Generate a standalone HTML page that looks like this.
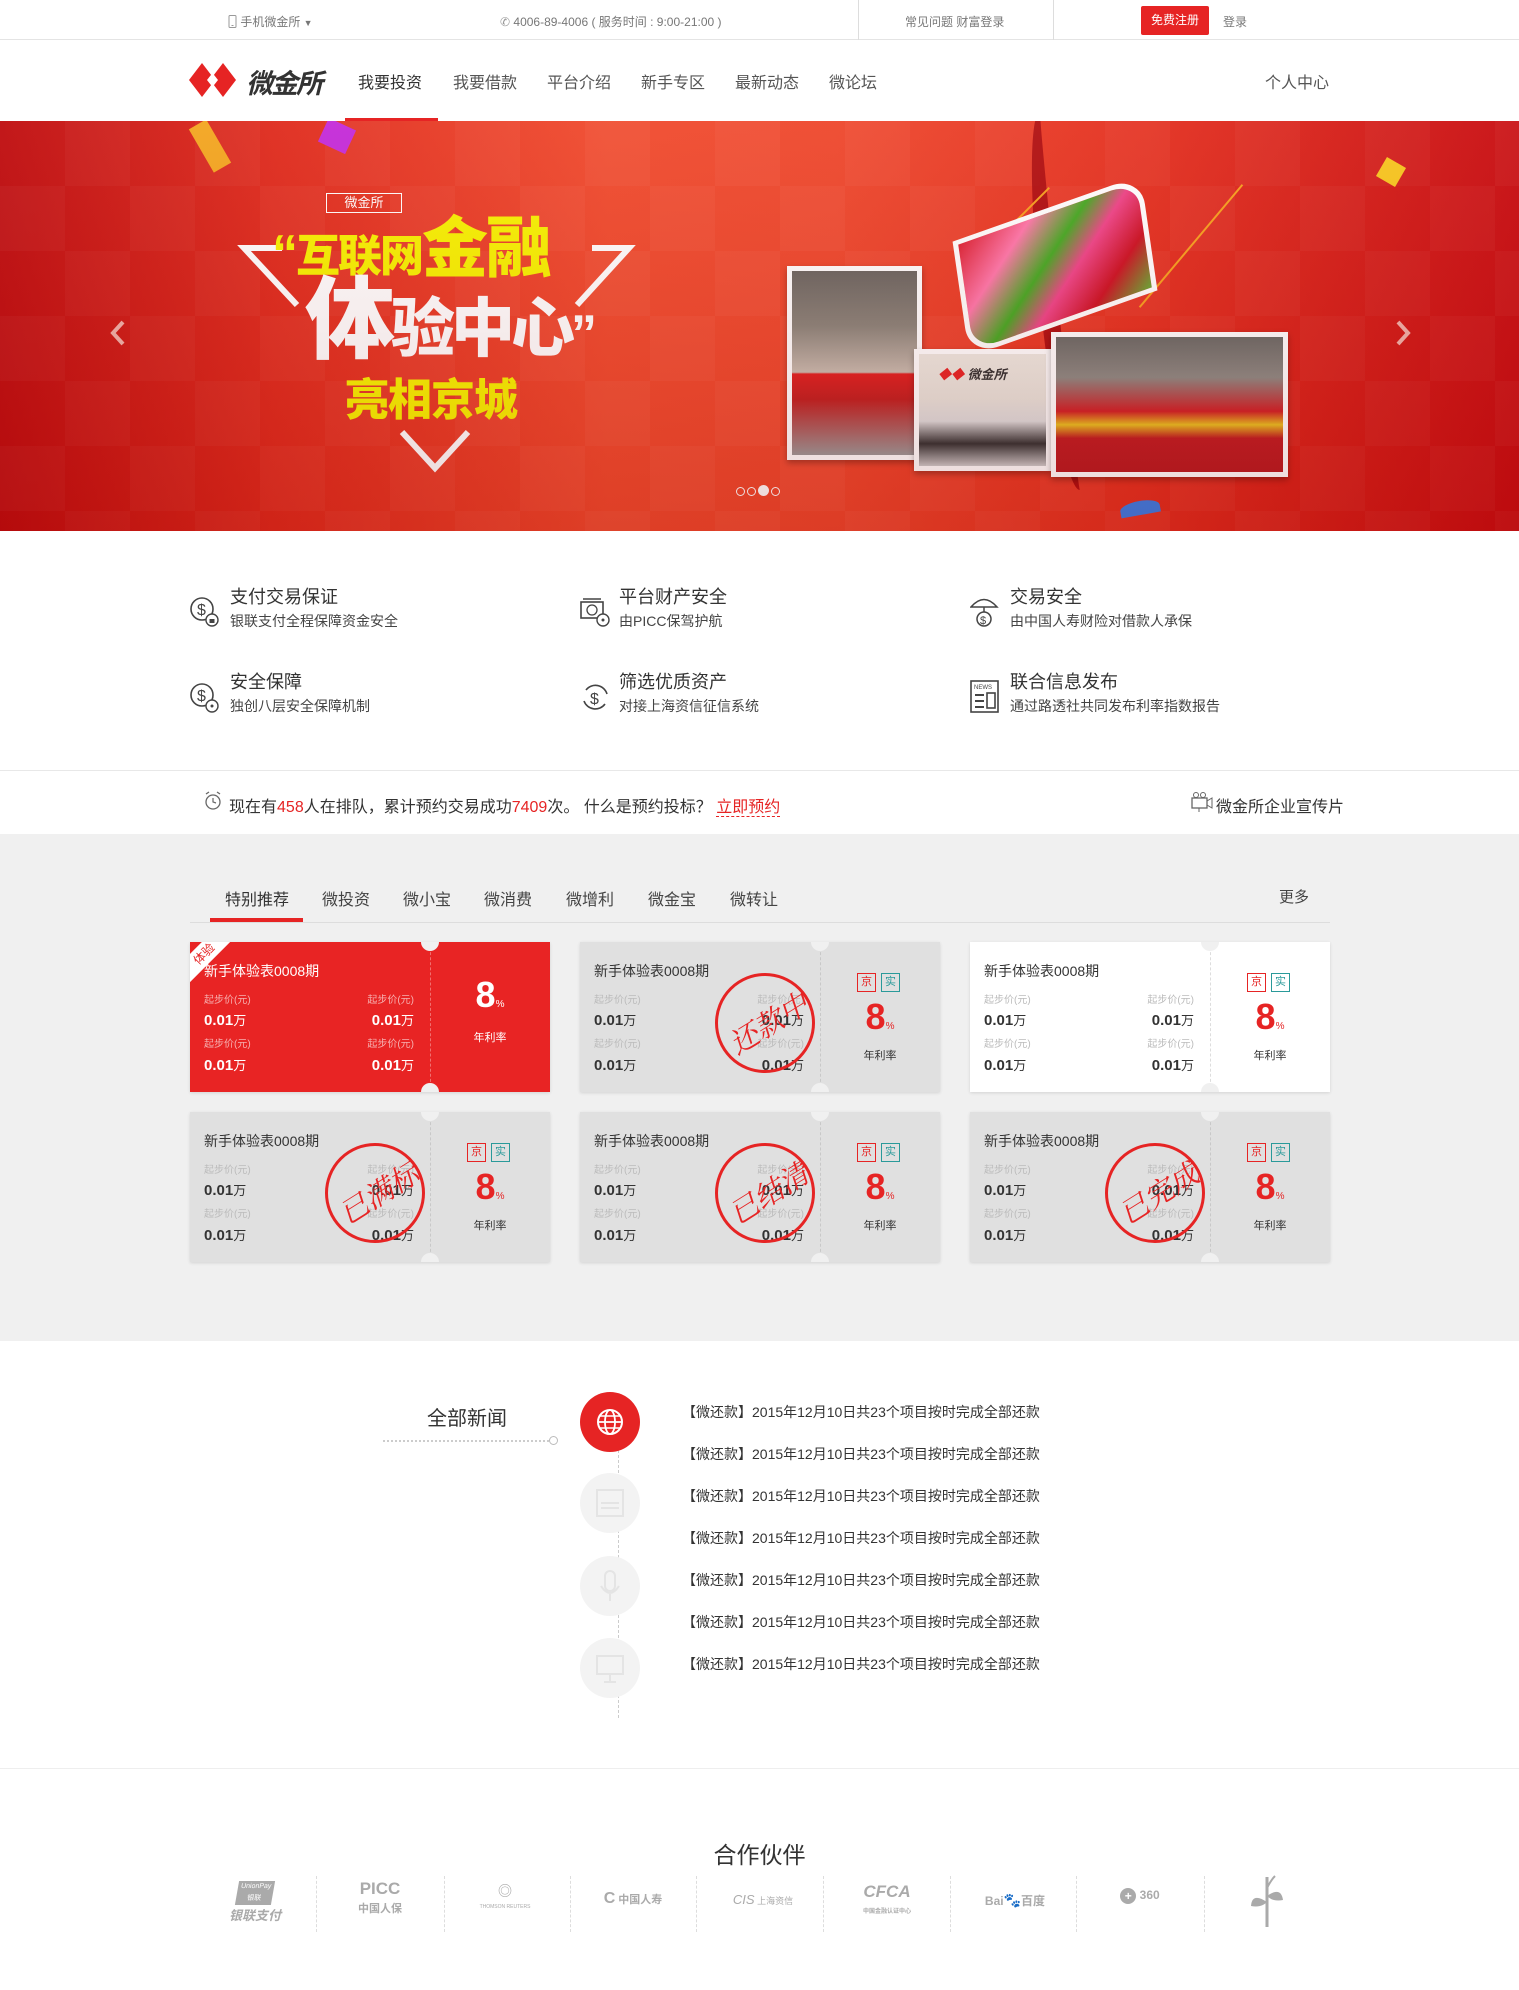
<!DOCTYPE html>
<html><head><meta charset="utf-8">
<style>
*{margin:0;padding:0;box-sizing:border-box}
body{width:1519px;height:1990px;background:#fff;font-family:"Liberation Sans","Noto Sans CJK SC",sans-serif;color:#333;position:relative;overflow:hidden}
.a{position:absolute;white-space:nowrap}
.top{position:absolute;left:0;top:0;width:1519px;height:40px;border-bottom:1px solid #e4e4e4;font-size:12px;color:#777}
.nav{font-size:16px;color:#555}
.banner{position:absolute;left:0;top:121px;width:1519px;height:410px;overflow:hidden;
background:linear-gradient(90deg,#bf0c0e 0%,#df2a1c 18%,#f04a2d 40%,#ee472c 55%,#e4301f 75%,#c80c10 100%)}
.banner:after{content:"";position:absolute;inset:0;background:linear-gradient(180deg,rgba(255,255,255,0.05),rgba(120,0,0,0.15));}
.chk{position:absolute;inset:0;background-image:linear-gradient(45deg,rgba(255,255,255,.03) 25%,transparent 25%,transparent 75%,rgba(255,255,255,.03) 75%),linear-gradient(45deg,rgba(255,255,255,.03) 25%,transparent 25%,transparent 75%,rgba(255,255,255,.03) 75%);background-size:130px 130px;background-position:0 0,65px 65px}
.ft{font-size:18px;color:#333}
.fs{font-size:14px;color:#444}
.gray{position:absolute;left:0;top:834px;width:1519px;height:507px;background:#f0f0f0}
.card{position:absolute;width:360px;height:150px;background:#e0e0e0;box-shadow:0 1px 3px rgba(0,0,0,.12);overflow:hidden}
.card .dv{position:absolute;left:240px;top:0;height:150px;border-left:1px dashed #c8c8c8}
.card .n1,.card .n2{position:absolute;left:231px;width:18px;height:18px;border-radius:50%;background:#f0f0f0}
.card .n1{top:-9px}.card .n2{bottom:-9px}
.card .t{position:absolute;left:14px;top:19px;font-size:14px;color:#333}
.card .l{position:absolute;font-size:10px;color:#bbb}
.card .v{position:absolute;font-size:15px;font-weight:bold;color:#333}
.card .v small{font-size:13px;font-weight:normal}
.card .r{left:auto;right:136px}
.card .big{position:absolute;left:0;width:120px;text-align:center;font-size:36px;font-weight:bold;color:#e62424}
.card .big small{font-size:10px;font-weight:normal}
.card .yr{position:absolute;left:240px;width:120px;text-align:center;font-size:11px;color:#333}
.bd{position:absolute;width:19px;height:19px;border:1px solid #e62424;color:#e62424;font-size:11px;text-align:center;line-height:17px}
.bd.g{border-color:#2a9a9a;color:#2a9a9a}
.stamp{position:absolute;width:100px;height:100px;border:3px solid #e62424;border-radius:50%;}
.stamp span{position:absolute;left:-4px;top:26px;width:108px;text-align:center;font-size:29px;color:#e62424;transform:rotate(-32deg);font-family:"Noto Serif CJK SC","Noto Sans CJK SC",serif;font-style:italic}
.news{position:absolute;left:682px;font-size:14px;color:#333}
.circ{position:absolute;left:580px;width:60px;height:60px;border-radius:50%;background:#f3f3f3}
.sep{position:absolute;top:1876px;height:56px;border-left:1px dashed #ddd}
.lg{position:absolute;color:#aaa;font-weight:bold;text-align:center}
</style></head><body>

<div class="top">
 <div class="a" style="left:228px;top:13px"><svg width="9" height="13" style="vertical-align:-2px"><rect x="1" y="0.5" width="7" height="12" rx="1" fill="none" stroke="#999"/><line x1="3.5" y1="10.5" x2="5.5" y2="10.5" stroke="#999"/></svg> 手机微金所 <span style="font-size:9px">&#9660;</span></div>
 <div class="a" style="left:500px;top:13px"><span style="color:#999">&#9990;</span> 4006-89-4006 ( 服务时间 : 9:00-21:00 )</div>
 <div style="position:absolute;left:858px;top:0;height:40px;border-left:1px solid #ddd"></div>
 <div style="position:absolute;left:1053px;top:0;height:40px;border-left:1px solid #ddd"></div>
 <div class="a" style="left:905px;top:13px">常见问题 财富登录</div>
 <div class="a" style="left:1141px;top:6px;width:68px;height:29px;background:#e62424;color:#fff;text-align:center;line-height:29px;border-radius:2px">免费注册</div>
 <div class="a" style="left:1223px;top:13px">登录</div>
</div>

<svg class="a" style="left:189px;top:63px" width="52" height="34" viewBox="0 0 52 34"><polygon points="13,0 26,17 13,34 0,17" fill="#e62424"/><polygon points="34,0 47,17 34,34 21,17" fill="#e62424"/><polygon points="23.5,10 29,17 23.5,24 18,17" fill="#fff"/></svg>
<div class="a" style="left:246px;top:62px;font-size:27px;font-weight:bold;font-style:italic;color:#333;letter-spacing:-2px">微金所</div>
<div class="a nav" style="left:358px;top:69px;color:#333">我要投资</div>
<div class="a nav" style="left:453px;top:69px">我要借款</div>
<div class="a nav" style="left:547px;top:69px">平台介绍</div>
<div class="a nav" style="left:641px;top:69px">新手专区</div>
<div class="a nav" style="left:735px;top:69px">最新动态</div>
<div class="a nav" style="left:829px;top:69px">微论坛</div>
<div class="a nav" style="left:1265px;top:69px">个人中心</div>
<div class="a" style="left:345px;top:118px;width:93px;height:3px;background:#e62424"></div>

<div class="banner">
 <div class="chk"></div>
 <div class="a" style="left:1040px;top:-10px;width:40px;height:380px;border-radius:50%;border-left:18px solid #a4060c;transform:rotate(-6deg);opacity:.8"></div>
 <div class="a" style="left:200px;top:0;width:20px;height:50px;background:#f3a51f;transform:rotate(-30deg)"></div>
 <div class="a" style="left:322px;top:2px;width:30px;height:26px;background:#c42ad8;transform:rotate(25deg)"></div>
 <div class="a" style="left:1190px;top:45px;width:2px;height:160px;background:#f7a01e;transform:rotate(40deg)"></div>
 <div class="a" style="left:1020px;top:55px;width:2px;height:80px;background:#f7a01e;transform:rotate(45deg)"></div>
 <div class="a" style="left:1120px;top:380px;width:40px;height:14px;background:#3a7ee6;border-radius:50% 50% 0 0;transform:rotate(-10deg)"></div>
 <div class="a" style="left:1380px;top:40px;width:22px;height:22px;background:#f7c51e;transform:rotate(30deg)"></div>
 <svg class="a" style="left:0;top:0" width="700" height="410"><polyline points="282,127 244,127 297,184" fill="none" stroke="#fff" stroke-width="6"/><polyline points="592,127 629,127 577,184" fill="none" stroke="#fff" stroke-width="6"/><polyline points="402,311 435,347 468,311" fill="none" stroke="#fff" stroke-width="6"/></svg>
 <div class="a" style="left:326px;top:72px;width:76px;height:20px;border:1px solid #fff;color:#fff;font-size:13px;text-align:center;line-height:18px">微金所</div>
 <div class="a" style="left:272px;top:92px;font-size:52px;font-weight:900;color:#f7f200;letter-spacing:-2px;line-height:70px">“<span style="font-size:44px">互联网</span><span style="font-size:66px">金融</span></div>
 <div class="a" style="left:305px;top:150px;font-size:90px;font-weight:900;color:#fff;letter-spacing:-4px;line-height:100px">体<span style="font-size:64px">验中心</span><span style="font-size:52px">”</span></div>
 <div class="a" style="left:345px;top:255px;font-size:44px;font-weight:900;color:#f7f200;letter-spacing:-1px;line-height:50px">亮相京城</div>
 <div class="a" style="left:960px;top:85px;width:190px;height:120px;border:5px solid #fff;background:linear-gradient(135deg,#d23 0%,#f7a 25%,#4a2 45%,#e48 60%,#c12 80%,#6a3 100%);transform:skewY(-12deg) rotate(-8deg);border-radius:0 30px 0 30px"></div>
 <div class="a" style="left:787px;top:145px;width:135px;height:194px;background:#fff;padding:5px;box-shadow:0 3px 6px rgba(0,0,0,.3)"><div style="width:100%;height:100%;background:linear-gradient(180deg,#6a6560 0%,#8a847a 30%,#c8bcb0 55%,#e02020 56%,#c02020 70%,#9a9a9a 100%)"></div></div>
 <div class="a" style="left:914px;top:228px;width:137px;height:122px;background:#fff;padding:5px;box-shadow:0 3px 6px rgba(0,0,0,.3)"><div style="width:100%;height:100%;background:linear-gradient(180deg,#eeeae2 0%,#e8e4dc 40%,#ddd 60%,#333 80%,#ccc 100%)"></div></div>
 <div class="a" style="left:938px;top:243px;font-size:13px;font-weight:bold;font-style:italic;color:#333"><span style="color:#e62424">◆◆</span> 微金所</div>
 <div class="a" style="left:1051px;top:211px;width:237px;height:145px;background:#fff;padding:5px;box-shadow:0 3px 6px rgba(0,0,0,.3)"><div style="width:100%;height:100%;background:linear-gradient(180deg,#6a6a66 0%,#8c8a84 30%,#d02026 55%,#e8c020 65%,#c01c22 75%,#b81a20 100%)"></div></div>
 <div class="a" style="left:736px;top:364px;font-size:0">
  <span style="display:inline-block;width:9px;height:9px;border:1px solid #fff;border-radius:50%;margin-right:2px"></span><span style="display:inline-block;width:9px;height:9px;border:1px solid #fff;border-radius:50%;margin-right:2px"></span><span style="display:inline-block;width:11px;height:11px;background:#fff;border-radius:50%;margin-right:2px"></span><span style="display:inline-block;width:9px;height:9px;border:1px solid #fff;border-radius:50%"></span>
 </div>
 <svg class="a" style="left:108px;top:198px" width="20" height="28"><polyline points="15,3 5,14 15,25" fill="none" stroke="#f0b0a8" stroke-width="4"/></svg>
 <svg class="a" style="left:1393px;top:198px" width="20" height="28"><polyline points="5,3 15,14 5,25" fill="none" stroke="#f0b0a8" stroke-width="4"/></svg>
</div>

<svg class="a" style="left:189px;top:596px" width="32" height="32" viewBox="0 0 32 32"><circle cx="13" cy="13" r="11" fill="none" stroke="#444" stroke-width="1.6"/><text x="8" y="19" font-size="16" fill="#444" font-family="Liberation Sans">$</text><circle cx="23" cy="24" r="6" fill="#fff" stroke="#444" stroke-width="1.4"/><rect x="20.5" y="23" width="5" height="4" fill="#444"/></svg>
<div class="a ft" style="left:230px;top:583px">支付交易保证</div>
<div class="a fs" style="left:230px;top:611px">银联支付全程保障资金安全</div>
<svg class="a" style="left:580px;top:596px" width="32" height="32" viewBox="0 0 32 32"><rect x="1" y="6" width="22" height="16" fill="none" stroke="#444" stroke-width="1.6"/><line x1="3" y1="3" x2="21" y2="3" stroke="#444" stroke-width="1.5"/><circle cx="12" cy="14" r="5" fill="none" stroke="#444" stroke-width="1.3"/><circle cx="23" cy="24" r="6" fill="#fff" stroke="#444" stroke-width="1.4"/><circle cx="23" cy="24" r="1.5" fill="#444"/></svg>
<div class="a ft" style="left:619px;top:583px">平台财产安全</div>
<div class="a fs" style="left:619px;top:611px">由PICC保驾护航</div>
<svg class="a" style="left:970px;top:594px" width="32" height="34" viewBox="0 0 32 34"><path d="M1 13 Q14 -2 27 13 Z" fill="none" stroke="#444" stroke-width="1.6"/><line x1="14" y1="13" x2="14" y2="18" stroke="#444" stroke-width="1.5"/><circle cx="14" cy="25" r="7" fill="none" stroke="#444" stroke-width="1.5"/><text x="10" y="30" font-size="11" fill="#444">$</text></svg>
<div class="a ft" style="left:1010px;top:583px">交易安全</div>
<div class="a fs" style="left:1010px;top:611px">由中国人寿财险对借款人承保</div>

<svg class="a" style="left:189px;top:682px" width="32" height="32" viewBox="0 0 32 32"><circle cx="13" cy="13" r="11" fill="none" stroke="#444" stroke-width="1.6"/><text x="8" y="19" font-size="16" fill="#444">$</text><circle cx="23" cy="24" r="6" fill="#fff" stroke="#444" stroke-width="1.4"/><circle cx="23" cy="24" r="1.5" fill="#444"/></svg>
<div class="a ft" style="left:230px;top:668px">安全保障</div>
<div class="a fs" style="left:230px;top:696px">独创八层安全保障机制</div>
<svg class="a" style="left:580px;top:682px" width="32" height="32" viewBox="0 0 32 32"><path d="M6 8 A12 12 0 0 1 27 12" fill="none" stroke="#444" stroke-width="1.6"/><path d="M25 22 A12 12 0 0 1 4 19" fill="none" stroke="#444" stroke-width="1.6"/><text x="10" y="22" font-size="16" fill="#444">$</text></svg>
<div class="a ft" style="left:619px;top:668px">筛选优质资产</div>
<div class="a fs" style="left:619px;top:696px">对接上海资信征信系统</div>
<svg class="a" style="left:970px;top:680px" width="30" height="34" viewBox="0 0 30 34"><rect x="1" y="1" width="27" height="31" fill="none" stroke="#444" stroke-width="1.6"/><text x="4" y="9" font-size="6" fill="#444">NEWS</text><line x1="5" y1="15" x2="14" y2="15" stroke="#444" stroke-width="2"/><line x1="5" y1="21" x2="14" y2="21" stroke="#444" stroke-width="2"/><line x1="5" y1="27" x2="14" y2="27" stroke="#444" stroke-width="2"/><rect x="17" y="13" width="8" height="15" fill="none" stroke="#444" stroke-width="1.6"/></svg>
<div class="a ft" style="left:1010px;top:668px">联合信息发布</div>
<div class="a fs" style="left:1010px;top:696px">通过路透社共同发布利率指数报告</div>

<div class="a" style="left:0;top:770px;width:1519px;border-top:1px solid #e8e8e8"></div>
<svg class="a" style="left:204px;top:791px" width="18" height="20" viewBox="0 0 18 20"><circle cx="9" cy="11" r="7" fill="none" stroke="#666" stroke-width="1.3"/><polyline points="9,7 9,11 12,12" fill="none" stroke="#666" stroke-width="1.2"/><line x1="2" y1="3" x2="5" y2="1" stroke="#666" stroke-width="1.3"/><line x1="16" y1="3" x2="13" y2="1" stroke="#666" stroke-width="1.3"/></svg>
<div class="a" style="left:229px;top:793px;font-size:16px;color:#333">现在有<span style="color:#e62424">458</span>人在排队，累计预约交易成功<span style="color:#e62424">7409</span>次。 什么是预约投标？ <span style="color:#e62424;border-bottom:1px dashed #e62424">立即预约</span></div>
<svg class="a" style="left:1191px;top:792px" width="22" height="20" viewBox="0 0 22 20"><rect x="1" y="6" width="15" height="10" fill="none" stroke="#666" stroke-width="1.3"/><circle cx="5" cy="3" r="2.5" fill="none" stroke="#666"/><circle cx="12" cy="3" r="2.5" fill="none" stroke="#666"/><polygon points="16,9 21,6 21,16 16,13" fill="none" stroke="#666"/><line x1="8" y1="16" x2="8" y2="20" stroke="#666"/></svg>
<div class="a" style="left:1216px;top:793px;font-size:16px;color:#333">微金所企业宣传片</div>

<div class="gray"></div>
<div class="a" style="left:190px;top:922px;width:1140px;border-top:1px solid #ddd"></div>
<div class="a" style="left:210px;top:918px;width:93px;height:4px;background:#e62424"></div>
<div class="a" style="left:225px;top:886px;font-size:16px;color:#333">特别推荐</div>
<div class="a" style="left:322px;top:886px;font-size:16px;color:#444">微投资</div>
<div class="a" style="left:403px;top:886px;font-size:16px;color:#444">微小宝</div>
<div class="a" style="left:484px;top:886px;font-size:16px;color:#444">微消费</div>
<div class="a" style="left:566px;top:886px;font-size:16px;color:#444">微增利</div>
<div class="a" style="left:648px;top:886px;font-size:16px;color:#444">微金宝</div>
<div class="a" style="left:730px;top:886px;font-size:16px;color:#444">微转让</div>
<div class="a" style="left:1279px;top:886px;font-size:15px;color:#444">更多</div>

<div class="card" style="left:190px;top:942px;background:#e82424">
 <div class="dv" style="border-color:#f07070"></div><div class="n1"></div><div class="n2"></div>
 <div class="a" style="left:-26px;top:2px;width:80px;height:20px;background:#fff;transform:rotate(-45deg);color:#e62424;font-size:12px;text-align:center;line-height:20px">体验</div>
 <div class="t" style="color:#fff">新手体验表0008期</div>
 <div class="l" style="left:14px;top:49px;color:#f6b0b0">起步价(元)</div><div class="l r" style="top:49px;color:#f6b0b0">起步价(元)</div>
 <div class="v" style="left:14px;top:68px;color:#fff">0.01<small>万</small></div><div class="v r" style="top:68px;color:#fff">0.01<small>万</small></div>
 <div class="l" style="left:14px;top:93px;color:#f6b0b0">起步价(元)</div><div class="l r" style="top:93px;color:#f6b0b0">起步价(元)</div>
 <div class="v" style="left:14px;top:113px;color:#fff">0.01<small>万</small></div><div class="v r" style="top:113px;color:#fff">0.01<small>万</small></div>
 <div class="big" style="left:240px;top:32px;color:#fff">8<small>%</small></div>
 <div class="yr" style="top:87px;color:#fff">年利率</div>
</div>

<div class="card" style="left:580px;top:942px">
 <div class="dv"></div><div class="n1"></div><div class="n2"></div>
 <div class="t">新手体验表0008期</div>
 <div class="l" style="left:14px;top:49px">起步价(元)</div><div class="l r" style="top:49px">起步价(元)</div>
 <div class="v" style="left:14px;top:68px">0.01<small>万</small></div><div class="v r" style="top:68px">0.01<small>万</small></div>
 <div class="l" style="left:14px;top:93px">起步价(元)</div><div class="l r" style="top:93px">起步价(元)</div>
 <div class="v" style="left:14px;top:113px">0.01<small>万</small></div><div class="v r" style="top:113px">0.01<small>万</small></div>
 <div class="stamp" style="left:135px;top:31px"><span>还款中</span></div>
 <div class="bd" style="left:277px;top:31px">京</div><div class="bd g" style="left:301px;top:31px">实</div>
 <div class="big" style="left:240px;top:54px">8<small>%</small></div>
 <div class="yr" style="top:105px">年利率</div>
</div>

<div class="card" style="left:970px;top:942px;background:#fff">
 <div class="dv" style="border-color:#ddd"></div><div class="n1"></div><div class="n2"></div>
 <div class="t">新手体验表0008期</div>
 <div class="l" style="left:14px;top:49px">起步价(元)</div><div class="l r" style="top:49px">起步价(元)</div>
 <div class="v" style="left:14px;top:68px">0.01<small>万</small></div><div class="v r" style="top:68px">0.01<small>万</small></div>
 <div class="l" style="left:14px;top:93px">起步价(元)</div><div class="l r" style="top:93px">起步价(元)</div>
 <div class="v" style="left:14px;top:113px">0.01<small>万</small></div><div class="v r" style="top:113px">0.01<small>万</small></div>
 <div class="bd" style="left:277px;top:31px">京</div><div class="bd g" style="left:301px;top:31px">实</div>
 <div class="big" style="left:240px;top:54px">8<small>%</small></div>
 <div class="yr" style="top:105px">年利率</div>
</div>

<div class="card" style="left:190px;top:1112px">
 <div class="dv"></div><div class="n1"></div><div class="n2"></div>
 <div class="t">新手体验表0008期</div>
 <div class="l" style="left:14px;top:49px">起步价(元)</div><div class="l r" style="top:49px">起步价(元)</div>
 <div class="v" style="left:14px;top:68px">0.01<small>万</small></div><div class="v r" style="top:68px">0.01<small>万</small></div>
 <div class="l" style="left:14px;top:93px">起步价(元)</div><div class="l r" style="top:93px">起步价(元)</div>
 <div class="v" style="left:14px;top:113px">0.01<small>万</small></div><div class="v r" style="top:113px">0.01<small>万</small></div>
 <div class="stamp" style="left:135px;top:31px"><span>已满标</span></div>
 <div class="bd" style="left:277px;top:31px">京</div><div class="bd g" style="left:301px;top:31px">实</div>
 <div class="big" style="left:240px;top:54px">8<small>%</small></div>
 <div class="yr" style="top:105px">年利率</div>
</div>

<div class="card" style="left:580px;top:1112px">
 <div class="dv"></div><div class="n1"></div><div class="n2"></div>
 <div class="t">新手体验表0008期</div>
 <div class="l" style="left:14px;top:49px">起步价(元)</div><div class="l r" style="top:49px">起步价(元)</div>
 <div class="v" style="left:14px;top:68px">0.01<small>万</small></div><div class="v r" style="top:68px">0.01<small>万</small></div>
 <div class="l" style="left:14px;top:93px">起步价(元)</div><div class="l r" style="top:93px">起步价(元)</div>
 <div class="v" style="left:14px;top:113px">0.01<small>万</small></div><div class="v r" style="top:113px">0.01<small>万</small></div>
 <div class="stamp" style="left:135px;top:31px"><span>已结清</span></div>
 <div class="bd" style="left:277px;top:31px">京</div><div class="bd g" style="left:301px;top:31px">实</div>
 <div class="big" style="left:240px;top:54px">8<small>%</small></div>
 <div class="yr" style="top:105px">年利率</div>
</div>

<div class="card" style="left:970px;top:1112px">
 <div class="dv"></div><div class="n1"></div><div class="n2"></div>
 <div class="t">新手体验表0008期</div>
 <div class="l" style="left:14px;top:49px">起步价(元)</div><div class="l r" style="top:49px">起步价(元)</div>
 <div class="v" style="left:14px;top:68px">0.01<small>万</small></div><div class="v r" style="top:68px">0.01<small>万</small></div>
 <div class="l" style="left:14px;top:93px">起步价(元)</div><div class="l r" style="top:93px">起步价(元)</div>
 <div class="v" style="left:14px;top:113px">0.01<small>万</small></div><div class="v r" style="top:113px">0.01<small>万</small></div>
 <div class="stamp" style="left:135px;top:31px"><span>已完成</span></div>
 <div class="bd" style="left:277px;top:31px">京</div><div class="bd g" style="left:301px;top:31px">实</div>
 <div class="big" style="left:240px;top:54px">8<small>%</small></div>
 <div class="yr" style="top:105px">年利率</div>
</div>

<div class="a" style="left:427px;top:1402px;font-size:20px;color:#333">全部新闻</div>
<div class="a" style="left:383px;top:1440px;width:166px;border-top:2px dotted #ccc"></div>
<div class="a" style="left:549px;top:1436px;width:9px;height:9px;border:1px solid #bbb;border-radius:50%;background:#fff"></div>
<div class="a" style="left:618px;top:1440px;height:278px;border-left:1px dashed #ccc"></div>
<div class="circ" style="top:1392px;background:#e62424"><svg width="60" height="60"><circle cx="30" cy="30" r="12" fill="none" stroke="#fff" stroke-width="2"/><ellipse cx="30" cy="30" rx="5" ry="12" fill="none" stroke="#fff" stroke-width="1.8"/><line x1="18" y1="30" x2="42" y2="30" stroke="#fff" stroke-width="1.8"/><line x1="20" y1="24" x2="40" y2="24" stroke="#fff" stroke-width="1.5"/><line x1="20" y1="36" x2="40" y2="36" stroke="#fff" stroke-width="1.5"/></svg></div>
<div class="circ" style="top:1473px"><svg width="60" height="60"><rect x="17" y="17" width="26" height="26" fill="none" stroke="#e4e4e4" stroke-width="2"/><line x1="21" y1="30" x2="39" y2="30" stroke="#e4e4e4" stroke-width="2"/><line x1="21" y1="35" x2="39" y2="35" stroke="#e4e4e4" stroke-width="2"/></svg></div>
<div class="circ" style="top:1556px"><svg width="60" height="60"><rect x="25" y="15" width="10" height="20" rx="5" fill="none" stroke="#e4e4e4" stroke-width="2"/><path d="M21 30 Q30 44 39 30" fill="none" stroke="#e4e4e4" stroke-width="2"/><line x1="30" y1="38" x2="30" y2="45" stroke="#e4e4e4" stroke-width="2"/></svg></div>
<div class="circ" style="top:1638px"><svg width="60" height="60"><rect x="17" y="18" width="26" height="18" fill="none" stroke="#e4e4e4" stroke-width="2"/><line x1="30" y1="36" x2="30" y2="44" stroke="#e4e4e4" stroke-width="2"/><line x1="24" y1="44" x2="36" y2="44" stroke="#e4e4e4" stroke-width="2"/></svg></div>
<div class="news" style="top:1402px">【微还款】2015年12月10日共23个项目按时完成全部还款</div>
<div class="news" style="top:1444px">【微还款】2015年12月10日共23个项目按时完成全部还款</div>
<div class="news" style="top:1486px">【微还款】2015年12月10日共23个项目按时完成全部还款</div>
<div class="news" style="top:1528px">【微还款】2015年12月10日共23个项目按时完成全部还款</div>
<div class="news" style="top:1570px">【微还款】2015年12月10日共23个项目按时完成全部还款</div>
<div class="news" style="top:1612px">【微还款】2015年12月10日共23个项目按时完成全部还款</div>
<div class="news" style="top:1654px">【微还款】2015年12月10日共23个项目按时完成全部还款</div>

<div class="a" style="left:0;top:1768px;width:1519px;border-top:1px solid #eee"></div>

<div class="a" style="left:0;top:1836px;width:1519px;text-align:center;font-size:23px;color:#333">合作伙伴</div>
<div class="sep" style="left:316px"></div><div class="sep" style="left:444px"></div><div class="sep" style="left:570px"></div><div class="sep" style="left:696px"></div><div class="sep" style="left:823px"></div><div class="sep" style="left:950px"></div><div class="sep" style="left:1076px"></div><div class="sep" style="left:1204px"></div>
<div class="a" style="left:237px;top:1881px;width:36px;height:24px;background:#aaa;transform:skewX(-10deg);color:#fff;font-size:7px;text-align:center;line-height:12px">UnionPay<br>银联</div>
<div class="lg a" style="left:225px;top:1905px;width:60px;font-size:13px;font-style:italic">银联支付</div>
<div class="lg a" style="left:350px;top:1880px;width:60px;font-size:17px;line-height:18px">PICC<br><span style="font-size:11px">中国人保</span></div>
<div class="lg a" style="left:470px;top:1885px;width:70px;font-size:14px;line-height:12px">◎<br><span style="font-size:5px;font-weight:normal">THOMSON REUTERS</span></div>
<div class="lg a" style="left:598px;top:1890px;width:70px;font-size:11px"><span style="font-size:16px">C</span> 中国人寿</div>
<div class="lg a" style="left:728px;top:1892px;width:70px;font-size:9px;font-weight:normal"><i style="font-size:13px">CIS</i> 上海资信</div>
<div class="lg a" style="left:852px;top:1884px;width:70px;font-size:17px;font-style:italic;line-height:16px">CFCA<br><span style="font-size:6px;font-style:normal">中国金融认证中心</span></div>
<div class="lg a" style="left:980px;top:1892px;width:70px;font-size:12px">Bai<span style="font-size:14px">🐾</span>百度</div>
<div class="lg a" style="left:1105px;top:1888px;width:70px;font-size:12px"><span style="display:inline-block;width:16px;height:16px;border-radius:50%;background:#aaa;color:#fff;line-height:16px;vertical-align:middle">+</span> 360</div>
<svg class="a" style="left:1247px;top:1872px" width="40" height="60"><line x1="20" y1="5" x2="20" y2="55" stroke="#aaa" stroke-width="3"/><path d="M20 30 Q5 20 4 34 Q14 36 20 30" fill="#aaa"/><path d="M20 24 Q34 14 36 28 Q26 30 20 24" fill="#aaa"/><path d="M20 16 Q24 8 28 4" fill="none" stroke="#aaa" stroke-width="2"/></svg>
</body></html>
